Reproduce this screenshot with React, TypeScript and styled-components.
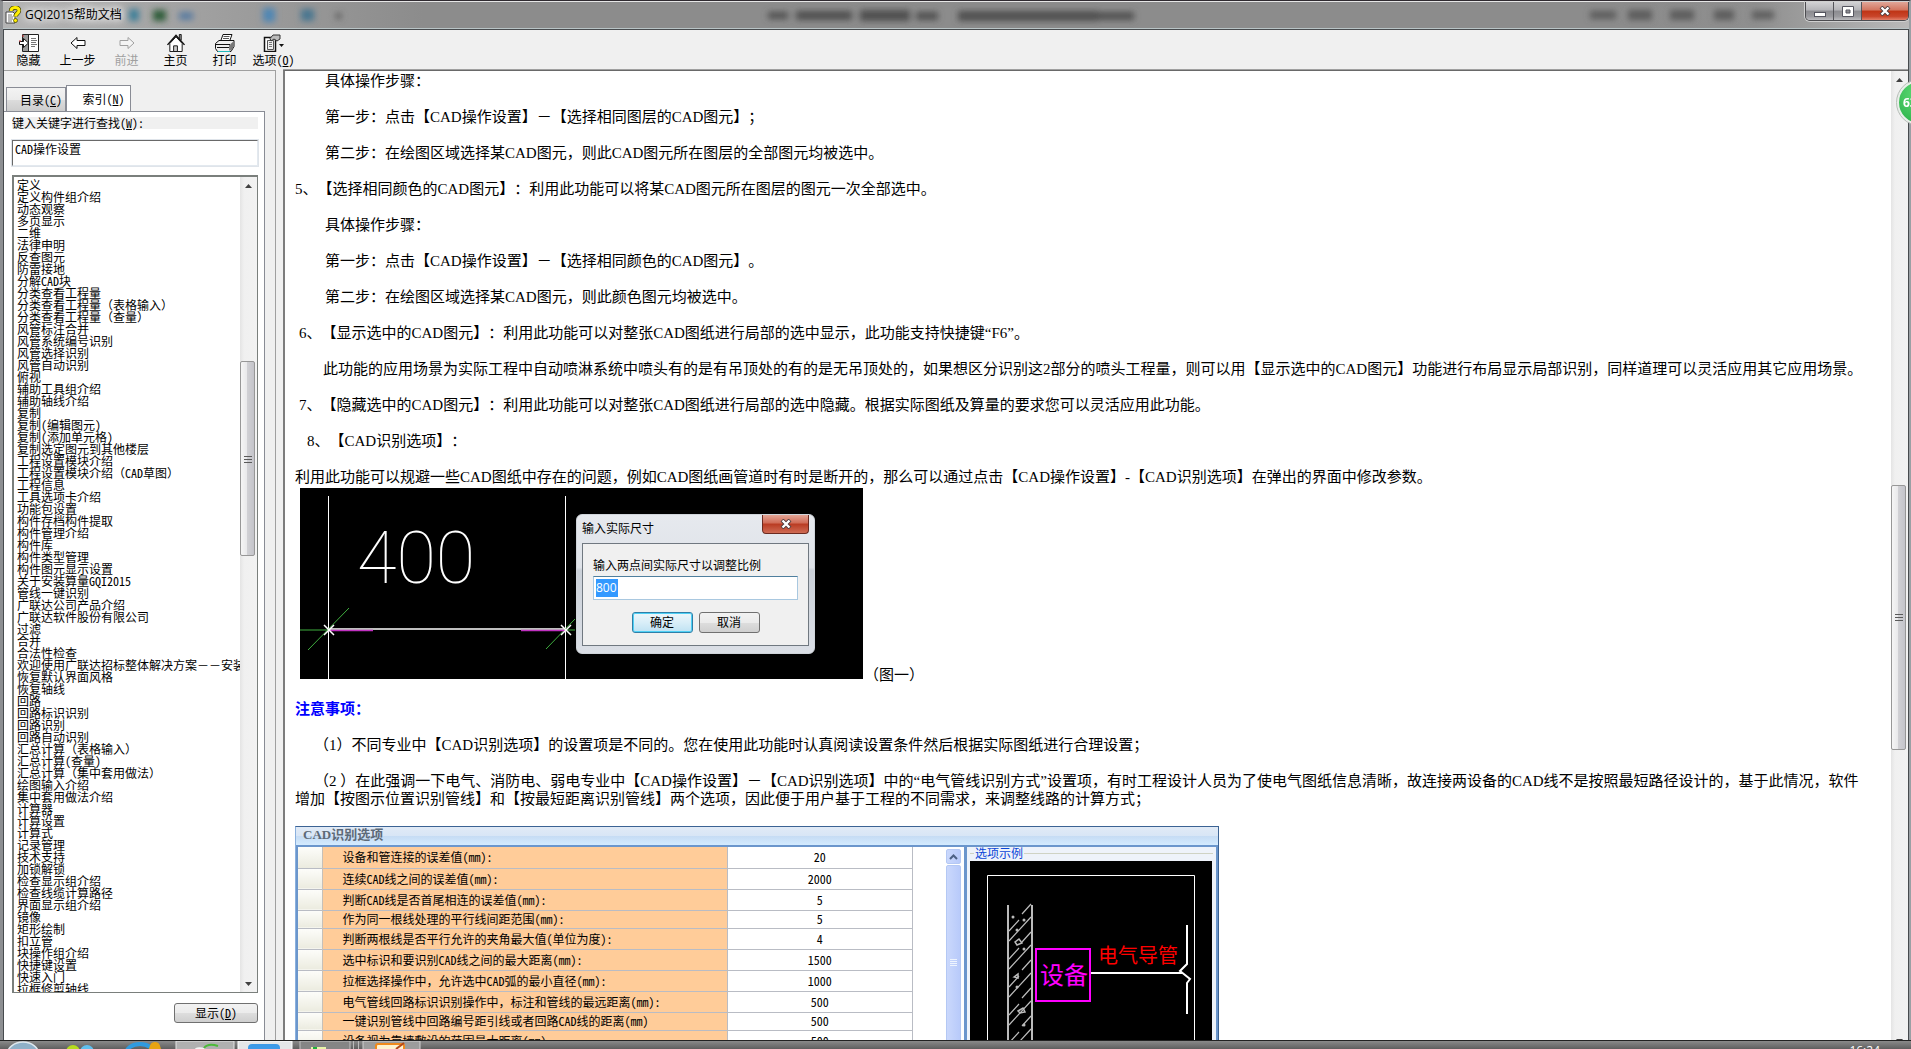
import React from 'react';
import styled, { createGlobalStyle, css } from 'styled-components';

const song = '"Noto Sans Mono CJK SC", "Noto Sans CJK SC", sans-serif';
const yahei = '"Open Sans", "Noto Sans CJK SC", sans-serif';
const prose = '"Liberation Serif", "Noto Sans CJK SC", serif';

const GlobalStyle = createGlobalStyle`
  *, *::before, *::after { box-sizing: border-box; }
  html, body { margin: 0; padding: 0; }
  body {
    font: 12px/12px ${song};
    color: #000;
    background: #8f8f8f;
    overflow: hidden;
    text-spacing-trim: space-all;
  }
  button, input { font: inherit; color: inherit; margin: 0; }
  ul { margin: 0; padding: 0; list-style: none; }
`;

/* ---------- window frame ---------- */

const Frame = styled.div`
  height: 100vh;
  display: flex;
  flex-direction: column;
  border-left: 3px solid #8d8f92;
  border-right: 2px solid #9aa0a4;
  border-top: 1px solid #2f2a30;
  overflow: hidden;
`;

const TitleBar = styled.header`
  flex: none;
  height: 28px;
  display: flex;
  align-items: center;
  justify-content: space-between;
  padding-left: 2px;
  background: linear-gradient(90deg, #b4b4b4 0, #a0a0a0 200px, #8c8c8c 420px, #8c8c8c 86%, #8f8f8f 92%, #b9b9b9 100%);
  border-top: 1px solid #e6e6e6;
  border-bottom: 1px solid #b9c4c6;
`;

const TitleText = styled.h1`
  margin: 0;
  display: flex;
  align-items: center;
  gap: 4px;
  font: 12px/18px ${yahei};
  white-space: nowrap;
  text-shadow: 0 0 6px #fff, 0 0 10px #fff, 0 0 14px #fff;
`;

const Ghosts = styled.svg`
  flex: 1;
  height: 25px;
  min-width: 0;
`;

const Controls = styled.div`
  align-self: flex-start;
  display: flex;
  border: 1px solid #4c4c50;
  border-top: 0;
  border-radius: 0 0 5px 5px;
  overflow: hidden;
  box-shadow: 0 0 0 1px #d0d0d0;
`;

const Control = styled.button<{ $close?: boolean }>`
  width: ${p => (p.$close ? 46 : 28)}px;
  height: 18px;
  padding: 0;
  display: grid;
  place-items: center;
  border: 0;
  border-right: ${p => (p.$close ? '0' : '1px solid #55555a')};
  background: ${p =>
    p.$close
      ? 'linear-gradient(#e0a698 0, #d2755f 45%, #bf3415 50%, #c9452a 80%, #e2806a 100%)'
      : 'linear-gradient(#d2d2d4 0, #b4b4b8 45%, #8b8b90 50%, #9a9a9e 80%, #bcbcc0 100%)'};
`;

const Client = styled.div`
  flex: 1;
  min-height: 0;
  display: flex;
  flex-direction: column;
  background: #f0f0f0;
  border: 1px solid #474b4e;
  border-bottom: 0;
`;

const Toolbar = styled.nav`
  flex: none;
  height: 40px;
  display: flex;
  padding: 4px 0 0;
`;

const Tool = styled.button`
  width: 49px;
  height: 34px;
  padding: 0;
  border: 0;
  background: none;
  display: flex;
  flex-direction: column;
  align-items: center;
  gap: 1px;
  font: 12px/14px ${song};
  white-space: nowrap;
  &:disabled { color: #a0a0a0; }
  svg { flex: none; }
`;

const Split = styled.div`
  flex: 1;
  min-height: 0;
  display: flex;
`;

/* ---------- index pane ---------- */

const Side = styled.aside`
  flex: none;
  width: 272px;
  display: flex;
  flex-direction: column;
  padding: 14px 10px 0 0;
  border-top: 1px solid #a0a0a0;
  border-right: 1px solid #a0a0a0;
`;

const Tabs = styled.div`
  display: flex;
  align-items: flex-end;
  padding-left: 2px;
`;

const Tab = styled.button<{ $active?: boolean }>`
  width: ${p => (p.$active ? 65 : 60)}px;
  height: ${p => (p.$active ? 27 : 24)}px;
  padding: 0 0 0 10px;
  margin-bottom: ${p => (p.$active ? -1 : 0)}px;
  border: 1px solid #898c95;
  border-bottom: 0;
  background: ${p => (p.$active ? '#fff' : 'linear-gradient(#f3f3f3, #ebebeb 50%, #dcdcdc 52%, #cdcdcd)')};
  font: 12px/14px ${song};
  white-space: nowrap;
`;

const Panel = styled.section`
  flex: 1;
  min-height: 0;
  display: flex;
  flex-direction: column;
  padding: 5px 6px 26px 8px;
  background: #fff;
  border: 1px solid #898c95;
  border-left: 0;
  border-bottom: 0;
`;

const FieldLabel = styled.label`
  background: #f0f0f0;
  font: 12px/12px ${song};
  height: 12px;
  margin-bottom: 11px;
`;

const Keyword = styled.input`
  width: 100%;
  height: 26px;
  padding: 0 2px 10px;
  border: 1px solid;
  border-color: #696969 #e3e9ef #e3e9ef #696969;
  outline: 1px solid #dfe4ea;
  background: #fff;
  font: 12px/14px ${song};
`;

const ListBox = styled.div`
  flex: 1;
  min-height: 0;
  display: flex;
  margin: 9px 0 10px;
  border: 2px solid #7a7f7c;
  border-right-width: 1px;
  border-bottom-width: 1px;
  background: #fff;
`;

const Entries = styled.ul`
  flex: 1;
  min-width: 0;
  overflow: hidden;
  padding: 2px 0 0 3px;
  li {
    height: 12px;
    font: 12px/12px ${song};
    white-space: nowrap;
  }
`;

const ShowButton = styled.button`
  align-self: flex-end;
  width: 84px;
  height: 20px;
  padding: 0;
  border: 1px solid #707070;
  border-radius: 3px;
  background: linear-gradient(#f2f2f2, #ebebeb 50%, #dddddd 52%, #cfcfcf);
  font: 12px/14px ${song};
`;

/* ---------- scroll bar ---------- */

const Bar = styled.div`
  flex: none;
  width: 17px;
  display: flex;
  flex-direction: column;
  background: linear-gradient(90deg, #e4e4e4, #f0f0f0 4px, #f2f2f2);
`;

const ArrowButton = styled.button`
  height: 17px;
  padding: 0;
  border: 0;
  background: none;
  display: grid;
  place-items: center;
`;

const Spacer = styled.div<{ $share: number }>`
  flex: ${p => p.$share} 1 0;
`;

const Thumb = styled.div<{ $share: number }>`
  flex: ${p => p.$share} 1 0;
  margin-right: 2px;
  display: grid;
  place-items: center;
  border: 1px solid #979797;
  border-radius: 2px;
  background: linear-gradient(90deg, #f5f5f5, #e9e9eb 45%, #d0d0d4 50%, #c4c4ca);
`;

function ScrollBar({ before, thumb, after }: { before: number; thumb: number; after: number }) {
  return (
    <Bar>
      <ArrowButton aria-label="向上滚动">
        <svg width="7" height="4" viewBox="0 0 7 4"><path d="M3.5 0 7 4H0Z" fill="#404040" /></svg>
      </ArrowButton>
      <Spacer $share={before} />
      <Thumb $share={thumb}>
        <svg width="8" height="8" viewBox="0 0 8 8"><path d="M0 1.5h8M0 4.5h8M0 7.5h8" stroke="#5a5a5a" /></svg>
      </Thumb>
      <Spacer $share={after} />
      <ArrowButton aria-label="向下滚动">
        <svg width="7" height="4" viewBox="0 0 7 4"><path d="M0 0H7L3.5 4Z" fill="#404040" /></svg>
      </ArrowButton>
    </Bar>
  );
}

/* ---------- topic pane ---------- */

const Topic = styled.main`
  flex: 1;
  min-width: 0;
  margin-left: 7px;
  display: flex;
  border-top: 1px solid #696969;
  border-left: 2px solid #7d7d7d;
  background: #fff;
  box-shadow: 0 -1px 0 #a0a0a0;
`;

const Article = styled.article`
  flex: 1;
  min-width: 0;
  overflow: hidden;
  padding: 1px 18px 0 10px;
`;

const Para = styled.p<{ $indent?: number }>`
  margin: 0 0 18px;
  font: 15px/18px ${prose};
  text-indent: ${p => p.$indent ?? 0}px;
`;

const Notice = styled.h2`
  margin: 0 0 18px;
  font: bold 15px/18px ${prose};
  color: #00f;
`;

const FigureRow = styled.div`
  display: flex;
  align-items: flex-end;
  gap: 1px;
  margin: -16px 0 16px 5px;
  font: 15px/18px ${prose};
`;

const Drawing = styled.div`
  flex: none;
  width: 563px;
  height: 191px;
  margin-bottom: 5px;
  display: grid;
  background: #000;
  > * { grid-area: 1 / 1; }
`;

const Dialog = styled.div`
  width: 239px;
  height: 140px;
  margin: 26px 0 0 276px;
  padding: 0 5px 7px;
  display: flex;
  flex-direction: column;
  border: 1px solid #cfd4da;
  border-radius: 6px;
  background: linear-gradient(#e6e9ee, #dfe3e9 38%, #cbd1d9 40%, #dbdfe6);
  font: 12px/16px ${yahei};
`;

const DialogHead = styled.div`
  flex: none;
  height: 28px;
  display: flex;
  justify-content: space-between;
  align-items: center;
`;

const DialogClose = styled.button`
  align-self: flex-start;
  width: 47px;
  height: 19px;
  padding: 0;
  display: grid;
  place-items: center;
  border: 1px solid #6b2a20;
  border-top: 0;
  border-radius: 0 0 4px 4px;
  background: linear-gradient(#e3a596, #d06a55 45%, #b93b22 50%, #cf6b54);
`;

const DialogBody = styled.div`
  flex: 1;
  display: flex;
  flex-direction: column;
  padding: 14px 10px 0;
  border: 1px solid #707880;
  background: #f0f0f0;
`;

const SizeField = styled.div`
  height: 24px;
  margin: 2px 0 12px;
  padding: 2px;
  display: flex;
  border: 1px solid #a9c8e0;
  border-top-color: #4f7f9e;
  background: #fff;
`;

const SizeInput = styled.input`
  width: 22px;
  height: 18px;
  padding: 0;
  border: 0;
  background: #3399ff;
  color: #fff;
  font: 12px/18px ${yahei};
`;

const DialogButtons = styled.div`
  display: flex;
  justify-content: center;
  gap: 6px;
`;

const DialogButton = styled.button<{ $primary?: boolean }>`
  width: 61px;
  height: 21px;
  padding: 0;
  border-radius: 3px;
  font: 12px/16px ${yahei};
  ${p =>
    p.$primary
      ? css`
          border: 1px solid #2f7fa8;
          box-shadow: inset 0 0 0 1px #4fd0f5;
          background: linear-gradient(#eef7fb, #d9eef8 50%, #bfe2f3);
        `
      : css`
          border: 1px solid #707070;
          background: linear-gradient(#f2f2f2, #ebebeb 50%, #dddddd 52%, #cfcfcf);
        `}
`;

const Options = styled.section`
  width: 924px;
  height: 240px;
  display: flex;
  flex-direction: column;
  border: 1px solid #3c6394;
  border-left-color: #8ab0dd;
  background: #fff;
`;

const OptionsTitle = styled.h3`
  flex: none;
  height: 18px;
  margin: 0;
  padding-left: 7px;
  font: bold 13px/16px ${prose};
  color: #5d6a78;
  background: linear-gradient(#e1eaf6, #d8e6f6 50%, #c6dcf4 52%, #d3ebff);
`;

const OptionsBody = styled.div`
  flex: 1;
  display: flex;
  border: 2px solid #6b96cc;
`;

const Grid = styled.table`
  width: 615px;
  align-self: flex-start;
  border-collapse: collapse;
  table-layout: fixed;
  font: 12px/14px ${song};
`;

const GridRow = styled.tr<{ $short?: boolean }>`
  height: ${p => (p.$short ? 18 : 21)}px;
  border-bottom: 1px solid #b9bcc4;
`;

const Handle = styled.td`
  width: 24px;
  padding: 0;
  background: linear-gradient(#fdfdfa, #ebebdf);
`;

const Name = styled.th`
  width: 405px;
  padding: 0 0 0 20px;
  text-align: left;
  font-weight: normal;
  background: #ffcc99;
  border-left: 1px solid #c6c0b8;
  border-right: 1px solid #b9bcc4;
`;

const Value = styled.td`
  padding: 0;
  text-align: center;
  border-right: 1px solid #b9bcc4;
`;

const XpBar = styled.div`
  width: 15px;
  margin-left: auto;
  display: flex;
  flex-direction: column;
  gap: 1px;
  padding: 2px 0;
`;

const XpPart = styled.div<{ $grow?: boolean }>`
  flex: ${p => (p.$grow ? '1' : 'none')};
  height: 15px;
  display: grid;
  place-items: center;
  border: 1px solid #b4c8f4;
  border-radius: 2px;
  background: linear-gradient(90deg, #cad8fc, #b8cafa);
`;

const Sample = styled.fieldset`
  width: 252px;
  margin: 0 0 0 3px;
  padding: 0 3px;
  min-width: 0;
  border: 0;
  border-left: 3px solid #6b96cc;
  background: #eef3fa;
  color: #0a46d8;
  font: 12px/14px ${song};
`;

const SampleTitle = styled.div`
  display: flex;
  align-items: center;
  gap: 1px;
  height: 14px;
  padding-bottom: 2px;
  &::before, &::after {
    content: '';
    width: 4px;
    height: 1px;
    background: #cfd3c4;
  }
  &::after { flex: 1; }
`;

/* ---------- desktop overlays ---------- */

const Assistant = styled.button`
  position: fixed;
  right: -31px;
  top: 80px;
  width: 45px;
  height: 45px;
  padding: 0 0 0 4px;
  text-align: left;
  border: 2px solid #e8efe9;
  border-radius: 50%;
  outline: 1px solid #b5bcb6;
  background: radial-gradient(circle at 50% 30%, #63dd78, #35ba52 75%, #1d8a4b);
  color: #fff;
  font: bold 12px/16px ${yahei};
`;

const Taskbar = styled.footer`
  position: fixed;
  left: 0;
  right: 0;
  bottom: 0;
  height: 9px;
  display: flex;
  justify-content: space-between;
  overflow: hidden;
  border-top: 1px solid #222;
  background: linear-gradient(#8a8a8a, #5f5f5f);
`;

const Clock = styled.time`
  padding: 3px 31px 0 0;
  color: #fff;
  font: 12px/14px ${yahei};
`;

/* ---------- icons ---------- */

const HelpIcon = () => (
  <svg width="16" height="18" viewBox="0 0 16 18">
    <path d="M1 6h7l2 2v9H1Z" fill="#fff" stroke="#444" />
    <path d="M3 9h4M3 11h5M3 13h5M3 15h4" stroke="#777" />
    <path d="M6 5C6 1 14 0 14 4.500c0 3-3.500 3-3.500 6" fill="none" stroke="#3b3b00" strokeWidth="4.500" />
    <path d="M6 5C6 1 14 0 14 4.500c0 3-3.500 3-3.500 6" fill="none" stroke="#ffee00" strokeWidth="3" />
    <circle cx="10.500" cy="14.500" r="2" fill="#ffee00" stroke="#3b3b00" strokeWidth=".7" />
  </svg>
);

const HideIcon = () => (
  <svg width="20" height="18" viewBox="0 0 20 18">
    <path d="M3.500.5h16v17h-16Z" fill="#fff" stroke="#222" />
    <path d="M9.500 1v16" stroke="#222" />
    <path d="M4 1h5v16H4Z" fill="#9a9a9a" />
    <path d="M12 4.500h5M12 6.500h6M12 8.500h5M12 10.500h6M12 12.500h4" stroke="#777" />
    <path d="M.5 7.500h4v-3l5 4.500-5 4.500v-3h-4Z" fill="#fff" stroke="#111" />
    <path d="M0 7h2M3 2h2" stroke="#c33" />
  </svg>
);

const ArrowIcon = ({ forward }: { forward?: boolean }) => (
  <svg width="20" height="18" viewBox="0 0 20 18">
    {forward ? (
      <path d="M3 6.500h8v-3l6 5.500-6 5.500v-3H3Z" fill="#f4f4f4" stroke="#a0a0a0" />
    ) : (
      <path d="M17 6.500H9v-3L3 9l6 5.500v-3h8Z" fill="#fff" stroke="#111" />
    )}
  </svg>
);

const HomeIcon = () => (
  <svg width="20" height="18" viewBox="0 0 20 19">
    <path d="M13.500 5V.5h2v6" fill="#999" stroke="#111" />
    <path d="M3.500 10v8.500h13V10L10 3Z" fill="#fff" stroke="#111" />
    <path d="M1 11.500 10 1.500l9 10" fill="none" stroke="#111" strokeWidth="1.500" />
    <path d="M7.500 18.500v-6h4v6Z" fill="#ccc" stroke="#111" />
  </svg>
);

const PrintIcon = () => (
  <svg width="22" height="18" viewBox="0 0 22 18">
    <path d="M6.500 7.500 9 .5h9l-2.500 7Z" fill="#fff" stroke="#111" />
    <path d="M9.500 2.500h6M9 4.500h6" stroke="#555" />
    <path d="M1.500 9.500 5 6.500h15v6l-3 5H3.500l-2-3Z" fill="#eee" stroke="#111" />
    <path d="M2 10.500h14v6M3 13.500h12" fill="none" stroke="#111" />
    <path d="M16.500 10 20 7v5l-3 5Z" fill="#777" />
    <path d="M4 17.500h12" stroke="#2bb" />
  </svg>
);

const OptionsIcon = () => (
  <svg width="22" height="18" viewBox="0 0 22 18">
    <path d="M1.500 3.500h11v14h-11Z" fill="#fff" stroke="#111" strokeWidth="1.500" />
    <path d="M4.500 6.500h6v9h-6Z" fill="#eee" stroke="#555" />
    <path d="M6 8.500h3M6 10.500h3M6 12.500h3" stroke="#777" />
    <path d="M7 4.500 10 1h7v4l-3 2-3-2-3 2Z" fill="#bbb" stroke="#333" />
    <path d="M16 10h5l-2.500 3Z" fill="#111" />
  </svg>
);

const CrossIcon = () => (
  <svg width="12" height="10" viewBox="0 0 12 10">
    <path d="m2 1 8 8m0-8L2 9" stroke="#4a3a3c" strokeWidth="4" />
    <path d="m2.500 1.500 7 7m0-7-7 7" stroke="#fff" strokeWidth="2.400" />
  </svg>
);

const TitleGhosts = () => (
  <Ghosts aria-hidden="true">
    <defs>
      <filter id="soft" x="-20%" y="-80%" width="140%" height="260%"><feGaussianBlur stdDeviation="3" /></filter>
    </defs>
    <g filter="url(#soft)">
      <path d="M7 6h10v12H7Z" fill="#3f7f99" />
      <path d="M31 7h13v11H31Z" fill="#2d5c38" />
      <path d="M57 9h14v8H57Z" fill="#5a7ba0" />
      <path d="M141 5h12v14h-12Z" fill="#4f86b4" />
      <path d="M179 6h13v12h-13Z" fill="#4a7690" />
      <path d="M214 10h5v6h-5Z" fill="#555" />
      <path d="M646 9h20v7h-20ZM674 8h56v9h-56ZM738 7h50v11h-50ZM794 9h22v8h-22ZM836 8h140v10H836ZM976 9h36v8h-36Z" fill="#505050" />
      <path d="M1468 8h26v8h-26ZM1506 7h24v10h-24ZM1548 7h24v10h-24ZM1592 7h20v10h-20ZM1630 8h22v8h-22Z" fill="#5c5c5c" />
    </g>
  </Ghosts>
);

const MeasureDrawing = () => (
  <svg width="563" height="191" viewBox="0 0 563 191">
    <g stroke="#fff" fill="none">
      <path d="M28.500 8v183M265.500 8v183" />
      <path d="M28 141h238" strokeWidth="1.500" />
    </g>
    <path d="M0 142h28M266 142h9M8 162 49 120M246 161l29-30" stroke="#3fae3f" fill="none" />
    <path d="M28 142.500h45M221 142.500h45" stroke="#c030c0" strokeWidth="1.500" />
    <path d="m24 137 10 10m0-10-10 10M261 137l10 10m0-10-10 10" stroke="#fff" strokeWidth="1.500" />
    <text x="57" y="95" fill="#fff" fontFamily="Roboto, sans-serif" fontWeight="100" fontSize="72">400</text>
  </svg>
);

const hatch = Array.from({ length: 13 }, (_, i) => {
  const y = 44 + i * 14;
  return i % 2 ? `M39 ${y + 22}L61 ${y - 2}` : `M39 ${y + 26}l10-11M52 ${y + 9}l9-10`;
}).join('');

const SampleSvg = styled.svg`
  display: block;
`;

const SampleDrawing = () => (
  <SampleSvg width="242" height="190" viewBox="0 0 242 190">
    <rect width="242" height="190" fill="#000" />
    <path d="M17.500 190V14.500h207V190" fill="none" stroke="#fff" />
    <path d="M38 44v146M62 44v146" stroke="#bbb" strokeWidth="2" />
    <path d={hatch} stroke="#bbb" strokeWidth="1.200" fill="none" />
    <g fill="#bbb">
      <circle cx="43" cy="56" r="1.500" /><circle cx="54" cy="59" r="1.500" /><circle cx="47" cy="69" r="1.500" />
      <circle cx="54" cy="88" r="1.500" /><circle cx="47" cy="126" r="1.500" /><circle cx="54" cy="164" r="1.500" />
    </g>
    <path d="m45 81 4-3 3 4-5 2ZM44 116l4-3v4ZM48 150l5-3 2 4-5 1Z" fill="none" stroke="#bbb" strokeWidth="1.500" />
    <rect x="66" y="88" width="54" height="52" fill="none" stroke="#f0f" strokeWidth="2" />
    <text x="70" y="123" fill="#f0f" fontSize="24" fontFamily="Noto Sans CJK SC, sans-serif" fontWeight="400">设备</text>
    <text x="128" y="102" fill="#f00" fontSize="20" fontFamily="Noto Sans CJK SC, sans-serif" fontWeight="400">电气导管</text>
    <path d="M121 112h91M217 64v39l-7 7 10 8-3 4v31" fill="none" stroke="#fff" strokeWidth="2" />
  </SampleSvg>
);

const TaskIcons = () => (
  <svg width="430" height="8" viewBox="0 0 430 8">
    <ellipse cx="23" cy="14" rx="16" ry="13" fill="#8fb0c8" stroke="#dfe8ee" strokeWidth="1.500" />
    <circle cx="73" cy="11" r="7" fill="#b6dc1e" /><circle cx="87" cy="11" r="7" fill="#5fc0ee" />
    <ellipse cx="140" cy="13" rx="14" ry="10" fill="none" stroke="#2f9be0" strokeWidth="4" />
    <path d="M155 1c5 0 5 4 6 7h-12c1-3 1-7 6-7Z" fill="#e8a412" />
    <rect x="176" y="0" width="58" height="12" fill="#b0b0b0" stroke="#e4e4e4" />
    <path d="M196 9c4-2 8 0 10 2" stroke="#f4f4f4" strokeWidth="4" fill="none" />
    <path d="M204 7c3-4 8-4 14-2" stroke="#4cba38" strokeWidth="2" fill="none" />
    <rect x="238" y="0" width="54" height="12" fill="#e4e6e8" stroke="#fff" />
    <rect x="248" y="3" width="32" height="12" rx="4" fill="#3d9ae8" />
    <rect x="300" y="0" width="50" height="12" fill="#858585" stroke="#c0c0c0" />
    <rect x="311" y="6" width="15" height="6" fill="#e8f4a8" /><rect x="313" y="6" width="4" height="2" fill="#1fb03b" />
    <path d="M353.500 0v8M358.500 0v8" stroke="#bbb" />
    <rect x="363" y="0" width="57" height="12" fill="#9c9c9c" stroke="#d0d0d0" />
    <rect x="376" y="3" width="28" height="10" rx="2" fill="#fff3d0" stroke="#f08a1c" strokeWidth="2" />
    <path d="m396 8 8-6" stroke="#b3471a" strokeWidth="2" />
  </svg>
);

/* ---------- data ---------- */

const entries = [
  '定义', '定义构件组介绍', '动态观察', '多页显示', '二维', '法律申明', '反查图元', '防雷接地', '分解CAD块',
  '分类查看工程量', '分类查看工程量（表格输入）', '分类查看工程量（查量）', '风管标注合并', '风管系统编号识别',
  '风管选择识别', '风管自动识别', '俯视', '辅助工具组介绍', '辅助轴线介绍', '复制', '复制(编辑图元)',
  '复制(添加单元格)', '复制选定图元到其他楼层', '工程设置模块介绍', '工程设置模块介绍（CAD草图）', '工程信息',
  '工具选项卡介绍', '功能包设置', '构件存档构件提取', '构件管理介绍', '构件库', '构件类型管理', '构件图元显示设置',
  '关于安装算量GQI2015', '管线一键识别', '广联达公司产品介绍', '广联达软件股份有限公司', '过滤', '合并', '合法性检查',
  '欢迎使用广联达招标整体解决方案－－安装算量', '恢复默认界面风格', '恢复轴线', '回路', '回路标识识别', '回路识别',
  '回路自动识别', '汇总计算（表格输入）', '汇总计算(查量)', '汇总计算（集中套用做法）', '绘图输入介绍',
  '集中套用做法介绍', '计算器', '计算设置', '计算式', '记录管理', '技术支持', '加锁解锁', '检查显示组介绍',
  '检查线缆计算路径', '界面显示组介绍', '镜像', '矩形绘制', '扣立管', '块操作组介绍', '快捷键设置', '快速入门',
  '拉框修剪轴线',
];

const paragraphs: { text: string; indent?: number }[] = [
  { indent: 30, text: '具体操作步骤：' },
  { indent: 30, text: '第一步：点击【CAD操作设置】－【选择相同图层的CAD图元】；' },
  { indent: 30, text: '第二步：在绘图区域选择某CAD图元，则此CAD图元所在图层的全部图元均被选中。' },
  { text: '5、【选择相同颜色的CAD图元】：利用此功能可以将某CAD图元所在图层的图元一次全部选中。' },
  { indent: 30, text: '具体操作步骤：' },
  { indent: 30, text: '第一步：点击【CAD操作设置】－【选择相同颜色的CAD图元】。' },
  { indent: 30, text: '第二步：在绘图区域选择某CAD图元，则此颜色图元均被选中。' },
  { indent: 4, text: '6、【显示选中的CAD图元】：利用此功能可以对整张CAD图纸进行局部的选中显示，此功能支持快捷键“F6”。' },
  { indent: 28, text: '此功能的应用场景为实际工程中自动喷淋系统中喷头有的是有吊顶处的有的是无吊顶处的，如果想区分识别这2部分的喷头工程量，则可以用【显示选中的CAD图元】功能进行布局显示局部识别，同样道理可以灵活应用其它应用场景。' },
  { indent: 4, text: '7、【隐藏选中的CAD图元】：利用此功能可以对整张CAD图纸进行局部的选中隐藏。根据实际图纸及算量的要求您可以灵活应用此功能。' },
  { indent: 12, text: '8、【CAD识别选项】：' },
  { text: '利用此功能可以规避一些CAD图纸中存在的问题，例如CAD图纸画管道时有时是断开的，那么可以通过点击【CAD操作设置】-【CAD识别选项】在弹出的界面中修改参数。' },
];

const notes = [
  '（1）不同专业中【CAD识别选项】的设置项是不同的。您在使用此功能时认真阅读设置条件然后根据实际图纸进行合理设置；',
  '（2 ）在此强调一下电气、消防电、弱电专业中【CAD操作设置】－【CAD识别选项】中的“电气管线识别方式”设置项，有时工程设计人员为了使电气图纸信息清晰，故连接两设备的CAD线不是按照最短路径设计的，基于此情况，软件增加【按图示位置识别管线】和【按最短距离识别管线】两个选项，因此便于用户基于工程的不同需求，来调整线路的计算方式；',
];

const options: [string, string, boolean?][] = [
  ['设备和管连接的误差值(mm):', '20'],
  ['连续CAD线之间的误差值(mm):', '2000'],
  ['判断CAD线是否首尾相连的误差值(mm):', '5'],
  ['作为同一根线处理的平行线间距范围(mm):', '5', true],
  ['判断两根线是否平行允许的夹角最大值(单位为度):', '4'],
  ['选中标识和要识别CAD线之间的最大距离(mm):', '1500'],
  ['拉框选择操作中，允许选中CAD弧的最小直径(mm):', '1000'],
  ['电气管线回路标识识别操作中，标注和管线的最远距离(mm):', '500'],
  ['一键识别管线中回路编号距引线或者回路CAD线的距离(mm)', '500', true],
  ['设备视为靠墙敷设的范围最大距离(mm)', '500'],
];

export default function App() {
  return (
    <>
      <GlobalStyle />
      <Frame>
        <TitleBar>
          <TitleText><HelpIcon />GQI2015帮助文档</TitleText>
          <TitleGhosts />
          <Controls>
            <Control aria-label="最小化">
              <svg width="12" height="14" viewBox="0 0 12 14"><rect x=".5" y="8.500" width="11" height="4" fill="#fff" stroke="#55555f" /></svg>
            </Control>
            <Control aria-label="最大化">
              <svg width="12" height="12" viewBox="0 0 12 12"><path d="M.5 1.500h11v10H.5ZM4 5v3h4V5Z" fill="#fff" fillRule="evenodd" stroke="#55555f" /></svg>
            </Control>
            <Control $close aria-label="关闭"><CrossIcon /></Control>
          </Controls>
        </TitleBar>
        <Client>
          <Toolbar>
            <Tool><HideIcon /><span>隐藏</span></Tool>
            <Tool><ArrowIcon /><span>上一步</span></Tool>
            <Tool disabled><ArrowIcon forward /><span>前进</span></Tool>
            <Tool><HomeIcon /><span>主页</span></Tool>
            <Tool><PrintIcon /><span>打印</span></Tool>
            <Tool><OptionsIcon /><span>选项(<u>O</u>)</span></Tool>
          </Toolbar>
          <Split>
            <Side>
              <Tabs role="tablist">
                <Tab role="tab">目录(<u>C</u>)</Tab>
                <Tab role="tab" aria-selected="true" $active>索引(<u>N</u>)</Tab>
              </Tabs>
              <Panel>
                <FieldLabel htmlFor="keyword">键入关键字进行查找(<u>W</u>):</FieldLabel>
                <Keyword id="keyword" type="text" defaultValue="CAD操作设置" />
                <ListBox>
                  <Entries>
                    {entries.map(e => <li key={e}>{e}</li>)}
                  </Entries>
                  <ScrollBar before={167} thumb={193} after={418} />
                </ListBox>
                <ShowButton>显示(<u>D</u>)</ShowButton>
              </Panel>
            </Side>
            <Topic>
              <Article>
                {paragraphs.map((p, i) => <Para key={i} $indent={p.indent}>{p.text}</Para>)}
                <FigureRow>
                  <Drawing>
                    <MeasureDrawing />
                    <Dialog>
                      <DialogHead>
                        <span>输入实际尺寸</span>
                        <DialogClose aria-label="关闭"><CrossIcon /></DialogClose>
                      </DialogHead>
                      <DialogBody>
                        <label htmlFor="size">输入两点间实际尺寸以调整比例</label>
                        <SizeField><SizeInput id="size" defaultValue="800" /></SizeField>
                        <DialogButtons>
                          <DialogButton $primary>确定</DialogButton>
                          <DialogButton>取消</DialogButton>
                        </DialogButtons>
                      </DialogBody>
                    </Dialog>
                  </Drawing>
                  <span>（图一）</span>
                </FigureRow>
                <Notice>注意事项：</Notice>
                {notes.map(n => <Para key={n} $indent={19}>{n}</Para>)}
                <Options>
                  <OptionsTitle>CAD识别选项</OptionsTitle>
                  <OptionsBody>
                    <Grid>
                      <tbody>
                        {options.map(([name, value, short]) => (
                          <GridRow key={name} $short={short}>
                            <Handle />
                            <Name scope="row">{name}</Name>
                            <Value>{value}</Value>
                          </GridRow>
                        ))}
                      </tbody>
                    </Grid>
                    <XpBar>
                      <XpPart>
                        <svg width="9" height="6" viewBox="0 0 9 6"><path d="m1 5 3.500-3.500L8 5" fill="none" stroke="#4d6185" strokeWidth="2" /></svg>
                      </XpPart>
                      <XpPart $grow>
                        <svg width="7" height="8" viewBox="0 0 7 8"><path d="M0 .5h7M0 2.500h7M0 4.500h7M0 6.500h7" stroke="#eef4fe" /></svg>
                      </XpPart>
                    </XpBar>
                    <Sample>
                      <SampleTitle>选项示例</SampleTitle>
                      <SampleDrawing />
                    </Sample>
                  </OptionsBody>
                </Options>
              </Article>
              <ScrollBar before={397} thumb={264} after={282} />
            </Topic>
          </Split>
        </Client>
      </Frame>
      <Assistant>63</Assistant>
      <Taskbar>
        <TaskIcons />
        <Clock>16:24</Clock>
      </Taskbar>
    </>
  );
}
